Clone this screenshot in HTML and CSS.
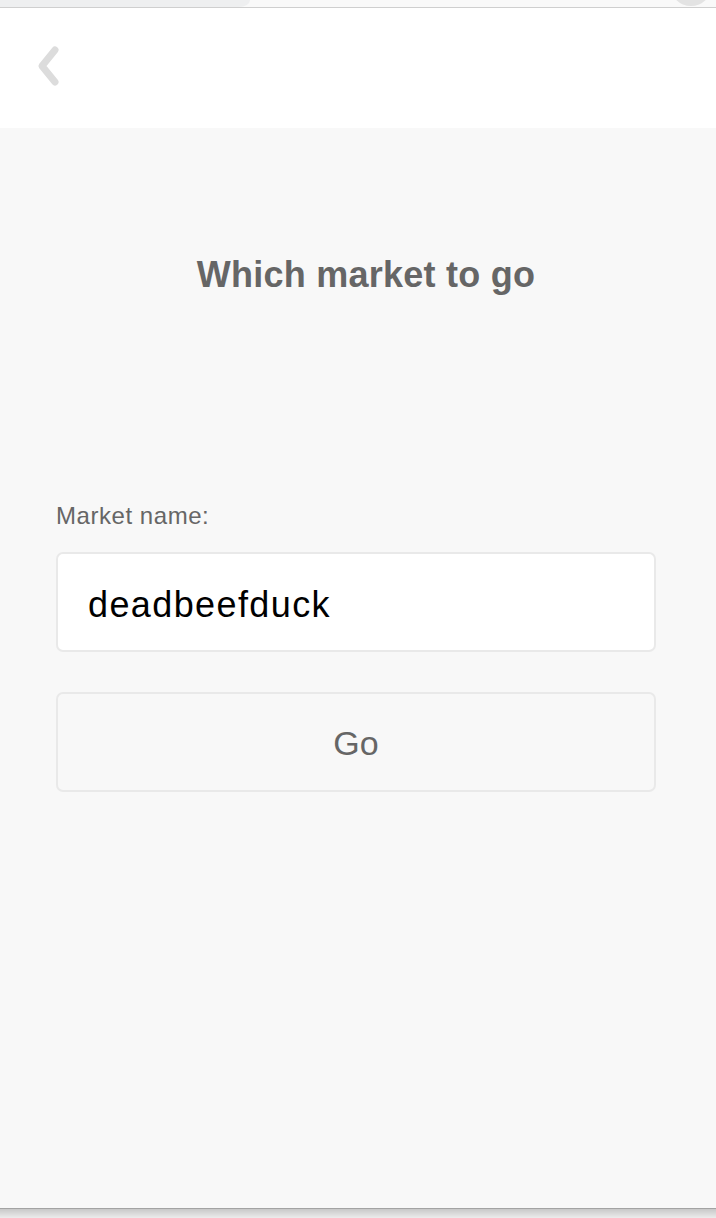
FILE: index.html
```html
<!DOCTYPE html>
<html lang="en">
<head>
<meta charset="utf-8">
<title>Which market to go</title>
<link rel="stylesheet" href="styles.css">
</head>
<body>
  <div class="chrome">
    <div class="chrome-tab"></div>
    <div class="chrome-avatar"></div>
  </div>
  <header class="header">
    <svg class="back" width="28" height="42" viewBox="0 0 28 42" aria-label="Back">
      <polyline points="21,5 8,21 21,37" fill="none" stroke="#dcdcdc" stroke-width="7" stroke-linecap="round" stroke-linejoin="round"/>
    </svg>
  </header>
  <main class="main">
    <h1 class="title">Which market to go</h1>
    <form class="form">
      <label class="label" for="market">Market name:</label>
      <input class="input" id="market" type="text" value="deadbeefduck">
      <button class="button" type="button">Go</button>
    </form>
  </main>
  <div class="bottom-edge"></div>
</body>
</html>
```
FILE: styles.css
```css
* { box-sizing: border-box; }

html, body {
  margin: 0;
  padding: 0;
}

body {
  height: 1218px;
  display: flex;
  flex-direction: column;
  font-family: "Liberation Sans", Arial, sans-serif;
  background: #f8f8f8;
  overflow: hidden;
}

.chrome {
  height: 8px;
  flex: 0 0 8px;
  display: flex;
  background: #f9f9f9;
  border-bottom: 1px solid #cfcfcf;
  overflow: hidden;
}

.chrome-tab {
  width: 250px;
  height: 7px;
  background: #eeeff0;
  border-bottom-right-radius: 16px 10px;
}

.chrome-avatar {
  width: 42px;
  height: 42px;
  margin-left: auto;
  margin-right: 4px;
  margin-top: -36px;
  border-radius: 50%;
  background: #e3e3e3;
}

.header {
  height: 120px;
  flex: 0 0 120px;
  background: #ffffff;
  display: flex;
  align-items: center;
  padding-left: 34px;
}

.back {
  display: block;
  margin-top: -4px;
}

.main {
  flex: 1;
  display: flex;
  flex-direction: column;
  padding: 122px 60px 0 56px;
}

.title {
  margin: 0;
  font-size: 36px;
  line-height: 50px;
  font-weight: bold;
  color: #666666;
  text-align: center;
  letter-spacing: 0.25px;
  padding-left: 20px;
}

.form {
  display: flex;
  flex-direction: column;
  margin-top: 201px;
}

.label {
  font-size: 24px;
  line-height: 30px;
  color: #666666;
  letter-spacing: 0.55px;
}

.input {
  margin-top: 21px;
  height: 100px;
  width: 100%;
  border: 2px solid #e9e9e9;
  border-radius: 7px;
  background: #ffffff;
  padding: 6px 0 0 30px;
  font-family: "Liberation Sans", Arial, sans-serif;
  font-size: 36px;
  letter-spacing: 1.4px;
  color: #000000;
  outline: none;
}

.button {
  margin-top: 40px;
  height: 100px;
  width: 100%;
  border: 2px solid #e9e9e9;
  border-radius: 7px;
  background: #f8f8f8;
  font-family: "Liberation Sans", Arial, sans-serif;
  font-size: 34px;
  color: #666666;
  padding: 2px 0 0 0;
}

.bottom-edge {
  flex: 0 0 10px;
  height: 10px;
  border-top: 1px solid #a3a3a3;
  background: linear-gradient(#c8c8c8, #ececec);
}
```
